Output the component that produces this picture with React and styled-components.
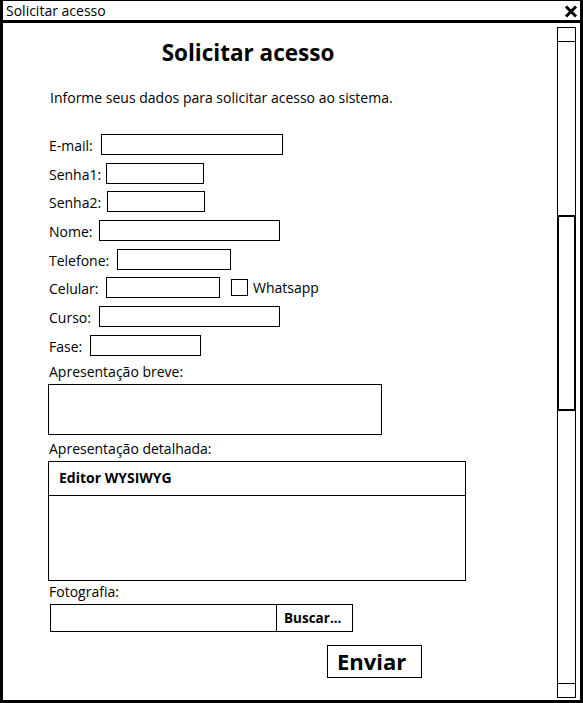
import React from 'react';
import styled, { createGlobalStyle } from 'styled-components';

const GlobalStyle = createGlobalStyle`
    html, body {
        margin: 0;
        padding: 0;
        background: white;
    }
    body {
        font-family: "Open Sans", "Noto Sans", sans-serif;
        color: black;
    }
    * {
        box-sizing: border-box;
    }
`;

const Window = styled.div`
    width: 583px;
    height: 703px;
    border: 3px solid black;
    border-top-width: 1px;
    display: flex;
    flex-direction: column;
    background: white;
`;

const TitleBar = styled.div`
    height: 22px;
    border-bottom: 3px solid black;
    display: flex;
    align-items: center;
    justify-content: space-between;
    padding: 1px 2px 0 3px;
    font-size: 14px;
    line-height: 16px;
`;

const CloseIcon = () => (
    <svg width="14" height="13" viewBox="0 0 14 13">
        <path d="M2 1.5 L12 11.5 M12 1.5 L2 11.5" stroke="black" strokeWidth="3" />
    </svg>
);

const Body = styled.div`
    flex: 1;
    display: flex;
    min-height: 0;
`;

const Content = styled.div`
    flex: 1;
    padding: 15px 0 0 45px;
    display: flex;
    flex-direction: column;
    align-items: flex-start;
    font-size: 14px;
    line-height: 18px;
`;

const Heading = styled.h1`
    width: 400px;
    margin: 0;
    text-align: center;
    font-size: 22.5px;
    line-height: 30px;
    font-weight: 700;
`;

const Intro = styled.p`
    margin: 21px 0 0 2px;
    font-size: 14px;
    line-height: 18px;
`;

const Fields = styled.div`
    display: flex;
    flex-direction: column;
    gap: 7.7px;
    margin-top: 27px;
    margin-left: 1px;
`;

const Row = styled.div`
    display: flex;
    align-items: center;
    height: 21px;
`;

const Label = styled.span`
    width: ${p => p.$w}px;
    flex-shrink: 0;
    white-space: nowrap;
    padding-top: 3px;
`;

const Input = styled.div`
    width: ${p => p.$w}px;
    height: 21px;
    border: 1px solid black;
    background: white;
`;

const Check = styled.div`
    width: 17px;
    height: 17px;
    border: 1px solid black;
    margin: 0 5px 0 11px;
`;

const BlockLabel = styled.div`
    margin-top: ${p => p.$top}px;
    margin-left: 1px;
`;

const TextArea = styled.div`
    width: 334px;
    height: 51px;
    margin-top: 3px;
    border: 1px solid black;
`;

const Editor = styled.div`
    width: 418px;
    height: 120px;
    margin-top: 3px;
    border: 1px solid black;
    display: flex;
    flex-direction: column;
`;

const EditorBar = styled.div`
    height: 34px;
    border-bottom: 1px solid black;
    display: flex;
    align-items: center;
    padding-left: 10px;
    font-weight: 700;
    font-size: 14px;
`;

const FileField = styled.div`
    display: flex;
    width: 303px;
    height: 28px;
    margin: 3px 0 0 2px;
    border: 1px solid black;
`;

const FilePath = styled.div`
    flex: 1;
    border-right: 1px solid black;
`;

const Browse = styled.div`
    width: 75px;
    display: flex;
    align-items: center;
    padding-left: 7px;
    font-weight: 700;
    font-size: 13.5px;
`;

const Submit = styled.div`
    width: 95px;
    height: 33px;
    margin: 13px 0 0 279px;
    border: 1px solid black;
    display: flex;
    align-items: center;
    padding-left: 9px;
    font-weight: 700;
    font-size: 22px;
`;

const ScrollBar = styled.div`
    width: 19px;
    margin: 4px 4px 2px 0;
    border: 1px solid black;
    display: flex;
    flex-direction: column;
`;

const ScrollBtn = styled.div`
    height: 14px;
    border-top: ${p => p.$bottom ? '1px solid black' : 'none'};
    border-bottom: ${p => p.$bottom ? 'none' : '1px solid black'};
`;

const Thumb = styled.div`
    height: 196px;
    margin-top: 173px;
    border: 2px solid black;
    margin-left: -1px;
    margin-right: -1px;
`;

const Spacer = styled.div`
    flex: 1;
`;

const rows = [
    { label: 'E-mail:', lw: 52, iw: 182 },
    { label: 'Senha1:', lw: 57, iw: 98 },
    { label: 'Senha2:', lw: 58, iw: 98 },
    { label: 'Nome:', lw: 50, iw: 181 },
    { label: 'Telefone:', lw: 68, iw: 114 },
    { label: 'Celular:', lw: 57, iw: 114, check: true },
    { label: 'Curso:', lw: 50, iw: 181 },
    { label: 'Fase:', lw: 41, iw: 111 },
];

export default function App() {
    return (
        <>
            <GlobalStyle />
            <Window>
                <TitleBar>
                    <span>Solicitar acesso</span>
                    <CloseIcon />
                </TitleBar>
                <Body>
                    <Content>
                        <Heading>Solicitar acesso</Heading>
                        <Intro>Informe seus dados para solicitar acesso ao sistema.</Intro>
                        <Fields>
                            {rows.map(r => (
                                <Row key={r.label}>
                                    <Label $w={r.lw}>{r.label}</Label>
                                    <Input $w={r.iw} />
                                    {r.check && (
                                        <>
                                            <Check />
                                            <span>Whatsapp</span>
                                        </>
                                    )}
                                </Row>
                            ))}
                        </Fields>
                        <BlockLabel $top={7}>Apresentação breve:</BlockLabel>
                        <TextArea />
                        <BlockLabel $top={5}>Apresentação detalhada:</BlockLabel>
                        <Editor>
                            <EditorBar>Editor WYSIWYG</EditorBar>
                        </Editor>
                        <BlockLabel $top={2}>Fotografia:</BlockLabel>
                        <FileField>
                            <FilePath />
                            <Browse>Buscar...</Browse>
                        </FileField>
                        <Submit>Enviar</Submit>
                    </Content>
                    <ScrollBar>
                        <ScrollBtn />
                        <Thumb />
                        <Spacer />
                        <ScrollBtn $bottom />
                    </ScrollBar>
                </Body>
            </Window>
        </>
    );
}
